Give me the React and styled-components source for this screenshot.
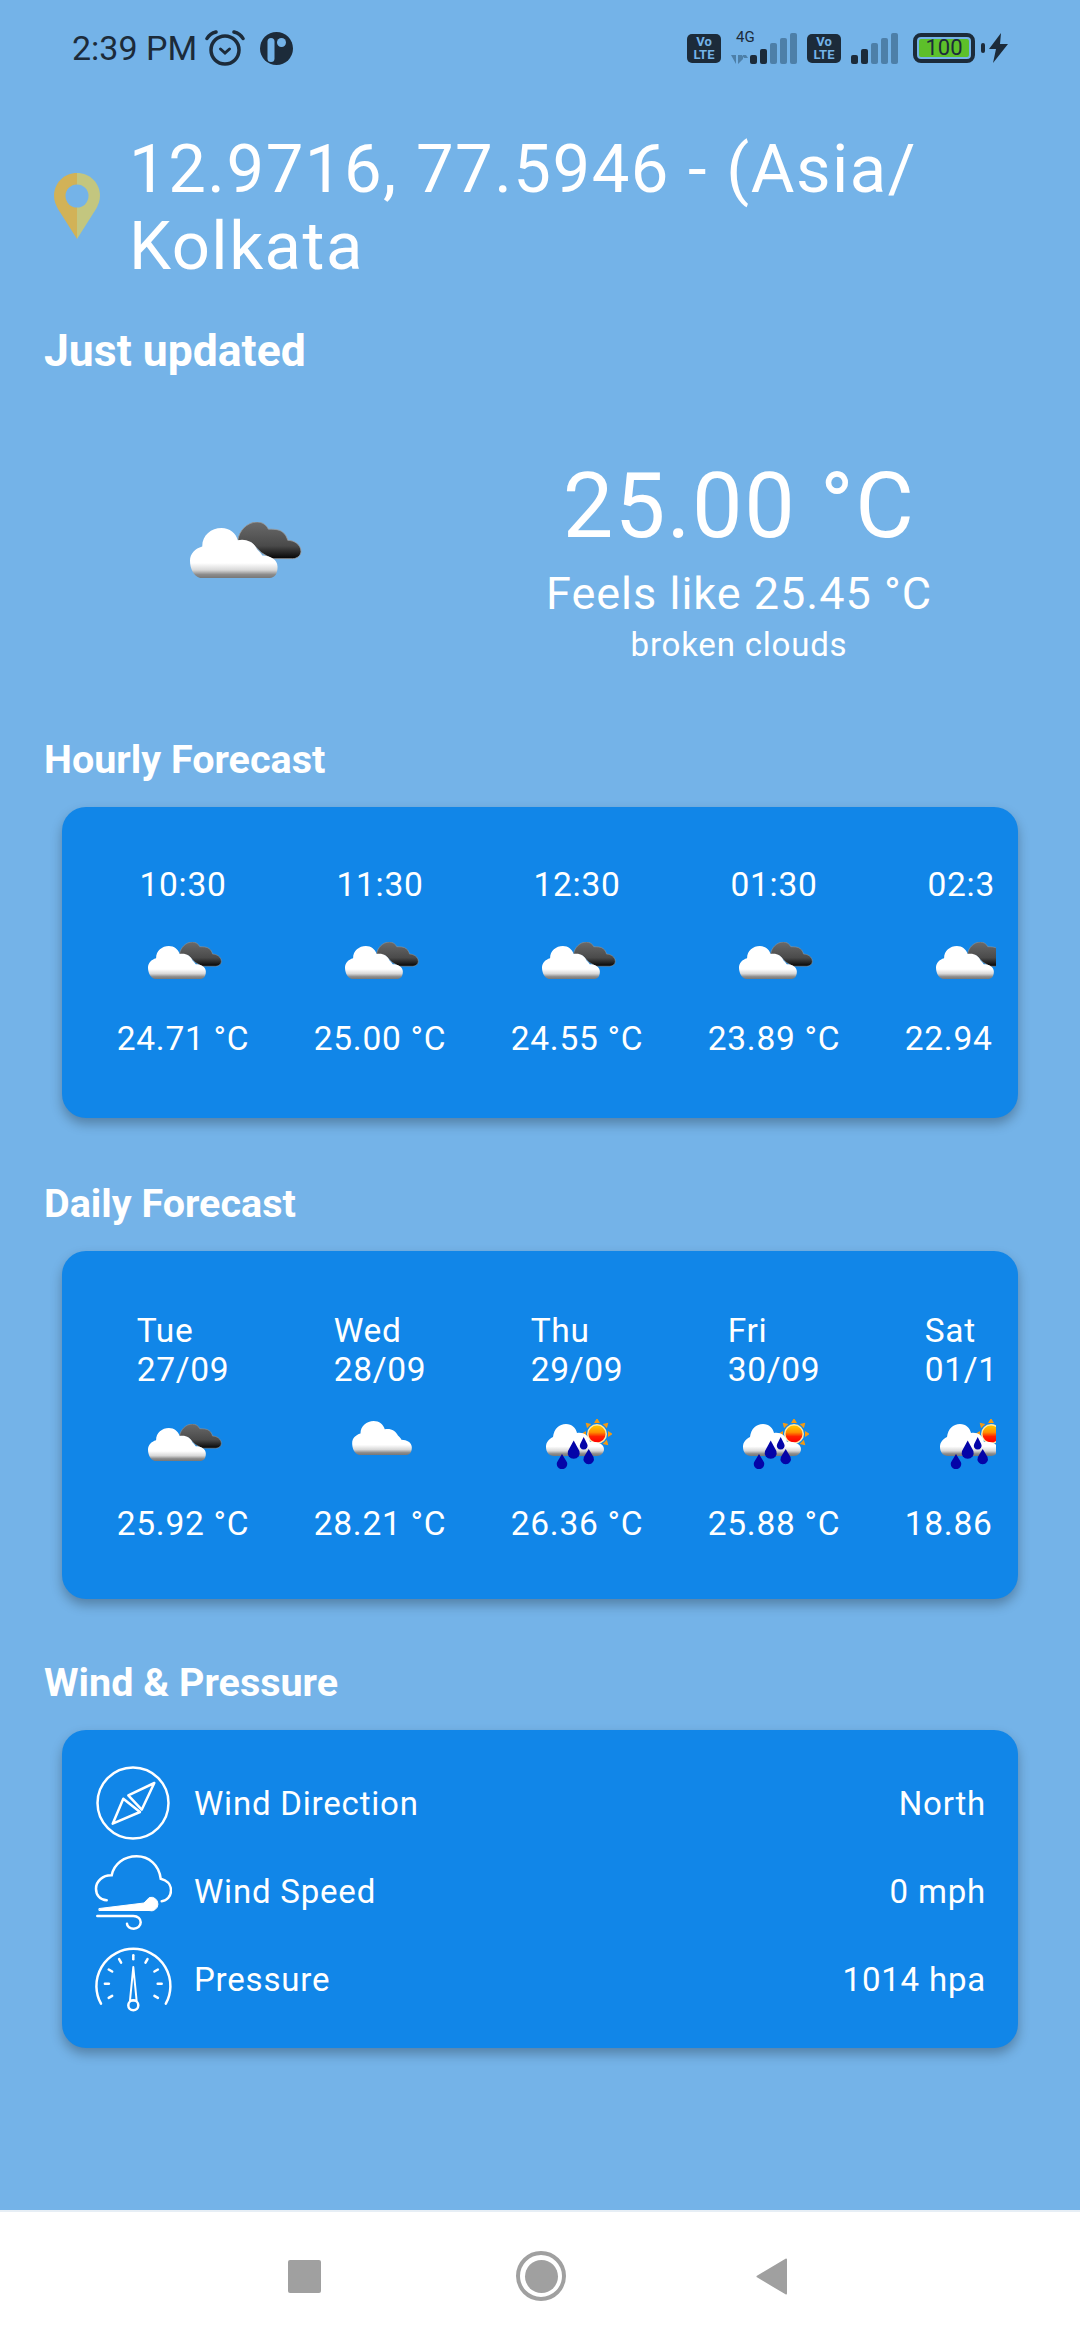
import React from 'react';
import styled, {createGlobalStyle} from 'styled-components';

const GlobalStyle = createGlobalStyle`
  html, body {
    margin: 0;
    padding: 0;
    background: #74b3e8;
    font-family: Roboto, "Liberation Sans", sans-serif;
  }
`;

const Page = styled.div`
  width: 1080px;
  height: 2340px;
  display: flex;
  flex-direction: column;
  overflow: hidden;
  background: #74b3e8;
  color: #fff;
`;

const Content = styled.main`
  flex: 1;
`;

const StatusBar = styled.div`
  height: 36px;
  padding: 30px 72px 0;
  display: flex;
  justify-content: space-between;
  align-items: center;
  color: #1c2b3a;
`;

const StatusGroup = styled.div`
  display: flex;
  align-items: center;
`;

const Time = styled.span`
  font-size: 34px;
  margin-right: 8px;
`;

const AlarmGap = styled.span`
  width: 15px;
`;

const VoLte = styled.div`
  width: 34px;
  height: 29px;
  margin-left: ${p => p.$left || 0}px;
  border-radius: 5px;
  background: #1c2b3a;
  color: #74b3e8;
  font-size: 13px;
  font-weight: 700;
  line-height: 13px;
  display: flex;
  flex-direction: column;
  align-items: center;
  justify-content: center;
`;

const SignalWrap = styled.div`
  position: relative;
  width: ${p => p.$width}px;
  height: 32px;
  margin: 0 ${p => p.$right || 0}px 0 ${p => p.$left || 0}px;
`;

const FourG = styled.span`
  position: absolute;
  left: 6px;
  top: -3px;
  font-size: 15px;
  line-height: 16px;
`;

const Battery = styled.div`
  width: 62px;
  height: 30px;
  box-sizing: border-box;
  border: 4px solid #1c2b3a;
  border-radius: 8px;
  padding: 2px;
  display: flex;
`;

const BatteryFill = styled.div`
  flex: 1;
  background: #5dc02a;
  border-radius: 2px;
  color: #1c2b3a;
  font-size: 22px;
  line-height: 18px;
  text-align: center;
`;

const BatteryNub = styled.div`
  width: 4px;
  height: 10px;
  margin-left: 6px;
  border-radius: 2px;
  background: #1c2b3a;
`;

const TitleRow = styled.div`
  margin-top: 65px;
  padding: 0 60px 0 54px;
  display: flex;
  align-items: center;
  gap: 29px;
`;

const Title = styled.h1`
  margin: 0;
  font-size: 67px;
  font-weight: 400;
  line-height: 77px;
  letter-spacing: 1.5px;
`;

const Heading = styled.h2`
  margin: ${p => p.$top}px 0 0 44px;
  font-size: ${p => p.$size || 39.5}px;
  font-weight: 700;
  line-height: 48px;
`;

const Current = styled.section`
  display: grid;
  grid-template-columns: 490px 498px;
  align-items: center;
  margin-top: 80px;
`;

const CurrentIcon = styled.div`
  display: flex;
  justify-content: center;
  padding: 0 0 16px 2px;
`;

const CurrentInfo = styled.div`
  display: flex;
  flex-direction: column;
  align-items: center;
`;

const Temp = styled.div`
  font-size: 90px;
  line-height: 104px;
  letter-spacing: 1.5px;
`;

const Feels = styled.div`
  font-size: 45px;
  line-height: 52px;
  margin-top: 9px;
  letter-spacing: 1px;
`;

const Desc = styled.div`
  font-size: 33px;
  line-height: 38px;
  margin-top: 6px;
  letter-spacing: 0.8px;
`;

const Card = styled.section`
  margin: 23px 62px 0;
  height: ${p => p.$height}px;
  box-sizing: border-box;
  padding: ${p => p.$padding};
  background: #1186e8;
  border-radius: 24px;
  box-shadow: 0 6px 12px rgba(0, 0, 0, 0.28);
`;

const ForecastRow = styled.div`
  display: flex;
  overflow: hidden;
`;

const ForecastItem = styled.div`
  flex: 0 0 197px;
  display: flex;
  flex-direction: column;
  align-items: center;
  padding-left: 1px;
  box-sizing: border-box;
`;

const ItemLabel = styled.div`
  font-size: 33.5px;
  line-height: 39px;
  letter-spacing: 0.7px;
`;

const ItemIcon = styled.div`
  height: ${p => p.$height}px;
  box-sizing: border-box;
  padding: 0 0 ${p => p.$lift || 0}px 3px;
  display: flex;
  align-items: center;
  justify-content: center;
`;

const ItemTemp = styled.div`
  font-size: 33.5px;
  line-height: 39px;
  letter-spacing: 0.7px;
  white-space: nowrap;
`;

const WindRow = styled.div`
  height: 88px;
  display: flex;
  align-items: center;
  font-size: 33px;
  letter-spacing: 0.8px;
`;

const WindLabel = styled.span`
  flex: 1;
  margin-left: 22px;
`;

const NavBar = styled.nav`
  height: 130px;
  box-sizing: border-box;
  padding-right: 4px;
  border-top: 2px solid #e6eef5;
  background: #fff;
  display: flex;
  align-items: center;
  justify-content: center;
`;

const NavSquare = styled.div`
  width: 33px;
  height: 33px;
  border-radius: 2px;
  background: #a0a0a0;
`;

const NavCircle = styled.div`
  width: 50px;
  height: 50px;
  margin: 0 190px 0 195px;
  box-sizing: border-box;
  border: 4px solid #a0a0a0;
  border-radius: 50%;
  display: flex;
  align-items: center;
  justify-content: center;
  &::after {
    content: '';
    width: 33px;
    height: 33px;
    border-radius: 50%;
    background: #a0a0a0;
  }
`;

const PlainCloudSvg = styled.svg`
  flex-shrink: 0;
  margin-bottom: 11px;
`;

function AlarmIcon() {
  return (
    <svg width="40" height="36" viewBox="0 0 40 36" fill="none" stroke="#1c2b3a" strokeLinecap="round">
      <circle cx="20" cy="20" r="14" strokeWidth="3.500" />
      <path d="M15.500 19l4.500 4 4.500-4" strokeWidth="3" />
      <path d="M2 8.500C4 5 7 3 11 2M38 8.500C36 5 33 3 29 2" strokeWidth="3.500" />
    </svg>
  );
}

function CircleBadge() {
  return (
    <svg width="33" height="33" viewBox="0 0 33 33">
      <circle cx="16.5" cy="16.5" r="16.5" fill="#1c2b3a" />
      <rect x="7.500" y="6" width="7" height="24" rx="3.500" fill="#74b3e8" />
      <circle cx="21.500" cy="10.500" r="4.500" fill="#74b3e8" />
    </svg>
  );
}

function Bars({active, arrows}) {
  const heights = [9, 15, 21, 26, 31];
  const left = arrows ? 20 : 0;
  return (
    <svg width={left + 47} height="32" viewBox={`0 0 ${left + 47} 32`} style={{position: 'absolute', left: 0, top: 0}}>
      {arrows && <path d="M1 23h5v9zM8 23v9l5-5v-4zM12 23h4l2 3h-4z" fill="#4d7fa8" />}
      {heights.map((h, i) => (
        <rect
          key={i}
          x={left + i * 10}
          y={32 - h}
          width="7"
          height={h}
          rx="2"
          fill={i < active ? '#1c2b3a' : '#4d7fa8'}
        />
      ))}
    </svg>
  );
}

function BoltIcon() {
  return (
    <svg width="19" height="30" viewBox="0 0 19 30" style={{marginLeft: 4}}>
      <path d="M12 0L0 16h7L4 30 19 11h-8z" fill="#1c2b3a" />
    </svg>
  );
}

function PinIcon() {
  return (
    <svg width="46" height="66" viewBox="0 0 46 66" style={{flexShrink: 0, marginBottom: 4}}>
      <path d="M23 0C10 0 0 10 0 23c0 5 2 9 4 13l19 30z" fill="#d2b257" />
      <path d="M23 0c13 0 23 10 23 23 0 5-2 9-4 13L23 66z" fill="#c3c67f" />
      <circle cx="23" cy="23" r="11.5" fill="#74b3e8" />
    </svg>
  );
}

const whiteCloud = 'M10 55C3 53 0 45 0 38 0 31 5 26 12 24 12 13 21 6 31 6 39 6 45 11 47 18 55 16 63 20 66 27 68 29 70 31 71 33 79 33 86 37 86 44 86 50 84 55 78 55Z';
const darkCloud = 'M47 18C48 9 56 0 66 0 71 0 75 3 77 7 81 7 88 7 91 10 94 12 95 15 96 18 102 18 109 22 109 29 109 33 105 36 101 36L80 36 70 30 60 20Z';

function CloudDefs({id}) {
  return (
    <defs>
      <linearGradient id={`${id}w`} x1="0" y1="0" x2="0" y2="1">
        <stop offset="0" stopColor="#fff" />
        <stop offset="0.7" stopColor="#fff" />
        <stop offset="0.84" stopColor="#d8d8d8" />
        <stop offset="0.93" stopColor="#8c8c8c" />
        <stop offset="1" stopColor="#777" />
      </linearGradient>
      <linearGradient id={`${id}d`} x1="0" y1="0" x2="0" y2="1">
        <stop offset="0" stopColor="#6a6a6a" />
        <stop offset="0.65" stopColor="#4a4a4a" />
        <stop offset="1" stopColor="#050505" />
      </linearGradient>
      <linearGradient id={`${id}s`} x1="0" y1="0" x2="0" y2="1">
        <stop offset="0" stopColor="#ffc800" />
        <stop offset="0.4" stopColor="#ff9000" />
        <stop offset="0.65" stopColor="#ff2000" />
        <stop offset="1" stopColor="#ff0000" />
      </linearGradient>
    </defs>
  );
}

function CloudIcon({width, id}) {
  return (
    <svg width={width} height={width * 58 / 110} viewBox="0 0 110 58" style={{flexShrink: 0}}>
      <CloudDefs id={id} />
      <path d={darkCloud} fill={`url(#${id}d)`} stroke="#9a9a9a" strokeWidth="0.8" />
      <path d={whiteCloud} fill={`url(#${id}w)`} />
    </svg>
  );
}

function PlainCloudIcon() {
  return (
    <PlainCloudSvg width="60" height="34" viewBox="0 6 86 49">
      <CloudDefs id="plain" />
      <path d={whiteCloud} fill="url(#plainw)" />
    </PlainCloudSvg>
  );
}

function RainIcon({id}) {
  const rays = [0, 45, 90, 135, 180, -45, -90];
  return (
    <svg width="66" height="50" viewBox="0 0 66 50" style={{flexShrink: 0}}>
      <CloudDefs id={id} />
      {rays.map(a => (
        <path key={a} d="M48 4l3-5 3 5z" fill="#f29a14" transform={`rotate(${a} 51 15)`} />
      ))}
      <circle cx="51" cy="15" r="10" fill="#ffe9a8" />
      <circle cx="51" cy="15" r="8.500" fill={`url(#${id}s)`} />
      <path d="M8 37C3 37 0 33 0 28 0 23 3 20 7 18 8 10 13 5 20 5 26 5 30 9 31 14 37 13 43 16 44 23 51 22 58 25 58 30 58 34 55 37 51 37z" fill={`url(#${id}w)`} />
      <path d="M16 35l-4.800 8a5.200 5.200 0 1 0 9.600 0z" fill="#0404a8" />
      <path d="M27.700 21.500l-5.700 10.500a6 6 0 1 0 11.400 0z" fill="#0404a8" />
      <path d="M42.700 30l-4.800 8a5.200 5.200 0 1 0 9.600 0z" fill="#0404a8" />
      <path d="M37.700 18l-3.500 7a3.900 3.900 0 1 0 7 0z" fill="#0404a8" />
    </svg>
  );
}

function CompassIcon() {
  return (
    <svg width="78" height="78" viewBox="0 0 78 78" fill="none" stroke="#fff" strokeWidth="2.5" strokeLinejoin="round" style={{flexShrink: 0}}>
      <circle cx="39" cy="39" r="35.500" />
      <path d="M60.300 19L34.300 31.300 47.700 45.700z" />
      <path d="M18.700 59.700L29.300 34.700 46 48z" />
    </svg>
  );
}

function WindIcon() {
  return (
    <svg width="78" height="78" viewBox="0 0 78 78" fill="none" stroke="#fff" strokeWidth="2.5" strokeLinecap="round" style={{flexShrink: 0}}>
      <path d="M12.700 48.300C6 48 2 43 2 36.700 2 29 9 23 17.700 23.300 20 12 30 4.300 42.700 4.300 55 4.300 65 13 66.700 26.700 72.500 28 77 32 77 38.300 77 44 73 49 67.700 49.300" />
      <path d="M5.300 56.500L50 51 55.300 45.500A6.800 6.800 0 1 1 55 58.500H5.300z" fill="#fff" strokeWidth="1" />
      <path d="M3.300 64H39.300C44 64 46.700 67 46.700 70.300 46.700 74 43.500 76.700 39.800 76.700 36 76.700 33 74.500 33 71.700" />
    </svg>
  );
}

function GaugeIcon() {
  const ticks = [-120, -90, -60, -30, 0, 30, 60, 90, 120];
  return (
    <svg width="78" height="78" viewBox="0 0 78 78" fill="none" stroke="#fff" strokeWidth="2.5" strokeLinecap="round" style={{flexShrink: 0}}>
      <path d="M7 63.700A37 37 0 1 1 71.800 63.700" />
      {ticks.map(a => (
        <path key={a} d="M39.300 15.300V19.300" transform={`rotate(${a} 39.300 43.700)`} />
      ))}
      <path d="M39.300 27L36 60.500H42.600z" strokeWidth="2" strokeLinejoin="round" />
      <circle cx="39.300" cy="65.300" r="5" />
    </svg>
  );
}

function BackIcon() {
  return (
    <svg width="32" height="37" viewBox="0 0 32 37">
      <path d="M30 1.500L1.500 18.500 30 35.500z" fill="#a0a0a0" stroke="#a0a0a0" strokeWidth="2" strokeLinejoin="round" />
    </svg>
  );
}

const hourly = [
  {time: '10:30', temp: '24.71 °C'},
  {time: '11:30', temp: '25.00 °C'},
  {time: '12:30', temp: '24.55 °C'},
  {time: '01:30', temp: '23.89 °C'},
  {time: '02:30', temp: '22.94 °C'},
];

const daily = [
  {day: 'Tue', date: '27/09', temp: '25.92 °C', icon: 'broken'},
  {day: 'Wed', date: '28/09', temp: '28.21 °C', icon: 'few'},
  {day: 'Thu', date: '29/09', temp: '26.36 °C', icon: 'rain'},
  {day: 'Fri', date: '30/09', temp: '25.88 °C', icon: 'rain'},
  {day: 'Sat', date: '01/10', temp: '18.86 °C', icon: 'rain'},
];

function dailyIcon(icon, i) {
  if (icon === 'few') return <PlainCloudIcon />;
  if (icon === 'rain') return <RainIcon id={`rain${i}`} />;
  return <CloudIcon width={74} id={`day${i}`} />;
}

export default function App() {
  return (
    <Page>
      <GlobalStyle />
      <Content>
        <StatusBar>
          <StatusGroup>
            <Time>2:39 PM</Time>
            <AlarmIcon />
            <AlarmGap />
            <CircleBadge />
          </StatusGroup>
          <StatusGroup>
            <VoLte><span>Vo</span><span>LTE</span></VoLte>
            <SignalWrap $width={67} $left={9}>
              <Bars active={2} arrows />
              <FourG>4G</FourG>
            </SignalWrap>
            <VoLte $left={10}><span>Vo</span><span>LTE</span></VoLte>
            <SignalWrap $width={47} $left={10} $right={15}>
              <Bars active={2} />
            </SignalWrap>
            <Battery><BatteryFill>100</BatteryFill></Battery>
            <BatteryNub />
            <BoltIcon />
          </StatusGroup>
        </StatusBar>

        <TitleRow>
          <PinIcon />
          <Title>12.9716, 77.5946 - (Asia/ Kolkata</Title>
        </TitleRow>

        <Heading $top={42} $size={44.5}>Just updated</Heading>

        <Current>
          <CurrentIcon><CloudIcon width={112} id="main" /></CurrentIcon>
          <CurrentInfo>
            <Temp>25.00 °C</Temp>
            <Feels>Feels like 25.45 °C</Feels>
            <Desc>broken clouds</Desc>
          </CurrentInfo>
        </Current>

        <Heading $top={72}>Hourly Forecast</Heading>
        <Card $height={311} $padding="58px 22px 0">
          <ForecastRow>
            {hourly.map((h, i) => (
              <ForecastItem key={h.time}>
                <ItemLabel>{h.time}</ItemLabel>
                <ItemIcon $height={115}><CloudIcon width={74} id={`hour${i}`} /></ItemIcon>
                <ItemTemp>{h.temp}</ItemTemp>
              </ForecastItem>
            ))}
          </ForecastRow>
        </Card>

        <Heading $top={62}>Daily Forecast</Heading>
        <Card $height={348} $padding="60px 22px 0">
          <ForecastRow>
            {daily.map((d, i) => (
              <ForecastItem key={d.date}>
                <ItemLabel>{d.day}<br />{d.date}</ItemLabel>
                <ItemIcon $height={115} $lift={6}>{dailyIcon(d.icon, i)}</ItemIcon>
                <ItemTemp>{d.temp}</ItemTemp>
              </ForecastItem>
            ))}
          </ForecastRow>
        </Card>

        <Heading $top={60}>Wind &amp; Pressure</Heading>
        <Card $height={318} $padding="29px 32px 0 32px">
          <WindRow><CompassIcon /><WindLabel>Wind Direction</WindLabel><span>North</span></WindRow>
          <WindRow><WindIcon /><WindLabel>Wind Speed</WindLabel><span>0 mph</span></WindRow>
          <WindRow><GaugeIcon /><WindLabel>Pressure</WindLabel><span>1014 hpa</span></WindRow>
        </Card>
      </Content>
      <NavBar>
        <NavSquare />
        <NavCircle />
        <BackIcon />
      </NavBar>
    </Page>
  );
}
